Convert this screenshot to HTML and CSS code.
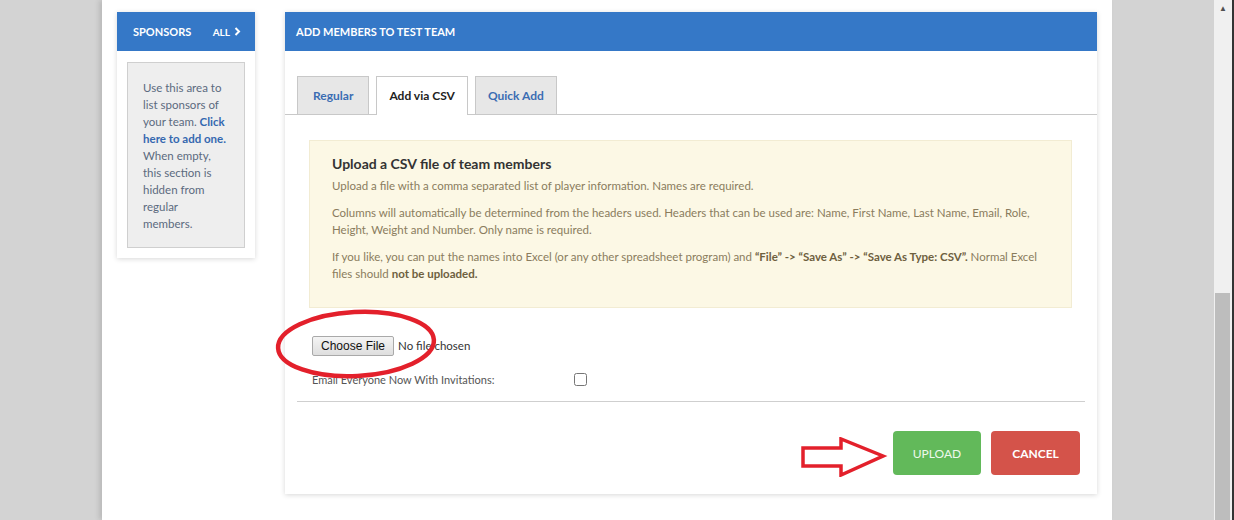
FILE: index.html
```html
<!DOCTYPE html>
<html lang="en">
<head>
    <meta charset="UTF-8">
    <meta name="viewport" content="width=device-width, initial-scale=1.0">
    <title>Add Members</title>
    <link rel="stylesheet" href="styles.css">
</head>
<body>

<div class="gutter"></div>

<div class="pagina">
    <aside class="tarjeta lateral">
        <div class="cabecera">
            <span>Sponsors</span>
            <a href="#" class="todos">All
                <svg width="7" height="9" viewBox="0 0 7 9"><path d="M1.5 1 L5 4.5 L1.5 8" fill="none" stroke="#fff" stroke-width="2"/></svg>
            </a>
        </div>
        <div class="vacio">
            Use this area to list sponsors of your team. <a href="#">Click here to add one.</a> When empty, this section is hidden from regular members.
        </div>
    </aside>

    <section class="tarjeta principal">
        <div class="cabecera">Add members to Test Team</div>

        <ul class="pestanas">
            <li><a href="#">Regular</a></li>
            <li class="activa"><a href="#">Add via CSV</a></li>
            <li><a href="#">Quick Add</a></li>
        </ul>

        <div class="aviso">
            <h4>Upload a CSV file of team members</h4>
            <p>Upload a file with a comma separated list of player information. Names are required.</p>
            <p>Columns will automatically be determined from the headers used. Headers that can be used are: Name, First Name, Last Name, Email, Role, Height, Weight and Number. Only name is required.</p>
            <p>If you like, you can put the names into Excel (or any other spreadsheet program) and <b>“File” -&gt; “Save As” -&gt; “Save As Type: CSV”.</b> Normal Excel files should <b>not be uploaded.</b></p>
        </div>

        <div class="formulario">
            <input type="file" class="archivo">
            <label class="fila">
                <span>Email Everyone Now With Invitations:</span>
                <input type="checkbox">
            </label>
        </div>

        <div class="acciones">
            <button class="boton subir">Upload</button>
            <button class="boton cancelar">Cancel</button>
        </div>

        <svg class="marca ovalo" width="170" height="76" viewBox="0 0 170 76">
            <ellipse cx="84" cy="38" rx="78" ry="32" fill="none" stroke="#e3202b" stroke-width="4.5" transform="rotate(-3 84 38)"/>
        </svg>
        <svg class="marca flecha" width="88" height="40" viewBox="0 0 88 40">
            <path d="M3 11 L41 11 L41 2 L83 19 L41 38 L41 29 L3 29 Z" fill="none" stroke="#e3202b" stroke-width="3.5"/>
        </svg>
    </section>
</div>

<div class="gutter"></div>

<div class="scroll">
    <div class="flechita">&#9650;</div>
    <div class="pista"></div>
    <div class="pulgar"></div>
</div>

</body>
</html>
```

FILE: styles.css
```css
body {
    margin: 0;
    height: 520px;
    overflow: hidden;
    display: flex;
    background-color: #d3d3d3;
    font-family: Lato, "Open Sans", sans-serif;
    color: #333;
}
.gutter {
    width: 102px;
    flex: none;
}
.pagina {
    width: 980px;
    flex: none;
    display: flex;
    align-items: flex-start;
    gap: 30px;
    padding: 12px 15px;
    background-color: white;
    box-shadow: -3px 0 5px rgba(0, 0, 0, 0.12);
}
.tarjeta {
    background-color: white;
    box-shadow: 0 1px 5px rgba(0, 0, 0, 0.16);
}
.cabecera {
    height: 39px;
    display: flex;
    align-items: center;
    justify-content: space-between;
    background-color: #3578c7;
    color: white;
    font-size: 11px;
    font-weight: bold;
    text-transform: uppercase;
}
.lateral {
    width: 138px;
    flex: none;
    padding-bottom: 10px;
}
.lateral .cabecera {
    padding: 0 14px 0 16px;
}
.todos {
    color: white;
    text-decoration: none;
    font-size: 10px;
    display: flex;
    align-items: center;
    gap: 4px;
}
.vacio {
    margin: 11px 10px 0;
    padding: 16px 14px 15px 15px;
    background-color: #eeeeee;
    border: 1px solid #cfcfcf;
    font-size: 11.5px;
    line-height: 17px;
    color: #5b6a7e;
}
.vacio a {
    color: #3568b0;
    font-weight: bold;
    text-decoration: none;
}
.principal {
    width: 812px;
    flex: none;
    position: relative;
    padding-bottom: 19px;
}
.principal .cabecera {
    padding-left: 11px;
}
.pestanas {
    list-style: none;
    margin: 25px 0 0;
    padding: 0 12px;
    display: flex;
    gap: 7px;
    border-bottom: 1px solid #c8c8c8;
}
.pestanas li {
    height: 37px;
    margin-bottom: -1px;
    border: 1px solid #c8c8c8;
    border-bottom: none;
    background-color: #e7e7e7;
}
.pestanas li.activa {
    background-color: white;
    height: 38px;
}
.pestanas a {
    display: block;
    padding: 0 12px;
    line-height: 38px;
    font-size: 12px;
    font-weight: bold;
    color: #3b6db3;
    text-decoration: none;
}
.pestanas li:first-child a {
    padding: 0 15px;
}
.pestanas .activa a {
    color: #222;
    padding: 0 12px;
}
.aviso {
    margin: 25px 25px 0 24px;
    padding: 14px 22px 15px;
    background-color: #fcf8e5;
    border: 1px solid #f2ecd3;
    font-size: 11.5px;
    line-height: 17px;
    color: #8a7c5d;
}
.aviso h4 {
    margin: 0 0 4px;
    font-size: 14px;
    line-height: 18px;
    color: #333;
}
.aviso p {
    margin: 0 0 10px;
}
.aviso b {
    color: #6e603f;
}
.formulario {
    margin: 28px 12px 0;
    padding: 0 15px 15px;
    border-bottom: 1px solid #cfcfcf;
}
.archivo {
    display: block;
    font-family: Lato, "Open Sans", sans-serif;
    font-size: 11.5px;
    color: #333;
}
.archivo::file-selector-button {
    font-family: Arial, "Liberation Sans", sans-serif;
    font-size: 12px;
    height: 20px;
    padding: 0 8px;
    margin-right: 4px;
    border: 1px solid #a9a9a9;
    border-radius: 2px;
    background: linear-gradient(#f4f4f4, #dedede);
    color: #111;
}
.fila {
    margin-top: 17px;
    display: flex;
    align-items: center;
    font-size: 11px;
    color: #555;
}
.fila span {
    width: 262px;
}
.fila input {
    margin: 0;
    width: 13px;
    height: 13px;
}
.acciones {
    display: flex;
    justify-content: flex-end;
    gap: 10px;
    padding: 29px 17px 0;
}
.boton {
    height: 44px;
    border: none;
    border-radius: 4px;
    color: white;
    font-family: Lato, "Open Sans", sans-serif;
    font-size: 12px;
    text-transform: uppercase;
    cursor: pointer;
}
.subir {
    width: 88px;
    background-color: #62b95a;
    color: #eef8ec;
}
.cancelar {
    width: 89px;
    background-color: #d4534a;
    font-weight: bold;
}
.marca {
    position: absolute;
}
.ovalo {
    left: -13px;
    top: 294px;
}
.flecha {
    left: 515px;
    top: 425px;
}
.scroll {
    width: 20px;
    flex: none;
    display: flex;
    flex-direction: column;
    background-color: #f0f0f0;
    border-right: 2px solid #333;
    box-sizing: border-box;
}
.flechita {
    height: 16px;
    font-size: 8px;
    line-height: 16px;
    text-align: center;
    color: #505050;
}
.pista {
    height: 277px;
}
.pulgar {
    flex: 1;
    margin: 0 2px 0 1px;
    background-color: #bdbdbd;
}
```
